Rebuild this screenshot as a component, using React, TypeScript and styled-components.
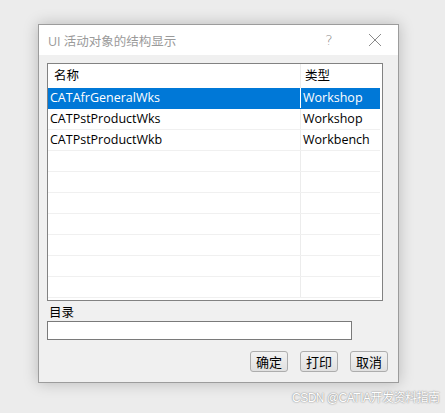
import styled, { createGlobalStyle } from 'styled-components'

const GlobalStyle = createGlobalStyle`
  html, body {
    margin: 0;
    padding: 0;
    background: #ececec;
  }
  body {
    font-family: 'Open Sans', 'Noto Sans CJK SC', sans-serif;
    font-size: 12px;
  }
`

const rows = [
  { name: 'CATAfrGeneralWks', type: 'Workshop', selected: true },
  { name: 'CATPstProductWks', type: 'Workshop' },
  { name: 'CATPstProductWkb', type: 'Workbench' }
]

const EMPTY_ROWS = 7

export const App = () => {
  return (
    <Page>
      <GlobalStyle />
      <Dialog>
        <TitleBar>
          <Title>UI 活动对象的结构显示</Title>
          <TitleTools>
            <Help>?</Help>
            <CloseBtn>
              <svg width="14" height="14" viewBox="0 0 14 14">
                <path d="M1 1 L13 13 M13 1 L1 13" stroke="#8a8a8a" strokeWidth="1" fill="none" />
              </svg>
            </CloseBtn>
          </TitleTools>
        </TitleBar>
        <Body>
          <ListBox>
            <HeaderRow>
              <HeadCell $pad={6}>名称</HeadCell>
              <Divider />
              <HeadCell $pad={4}>类型</HeadCell>
            </HeaderRow>
            {rows.map((r) => (
              <Row key={r.name} $selected={r.selected}>
                <Cell>{r.name}</Cell>
                <Divider $light={r.selected} />
                <Cell>{r.type}</Cell>
              </Row>
            ))}
            {Array.from({ length: EMPTY_ROWS }).map((_, i) => (
              <Row key={i}>
                <Cell />
                <Divider />
                <Cell />
              </Row>
            ))}
          </ListBox>
          <Label>目录</Label>
          <TextInput />
          <Buttons>
            <Button>确定</Button>
            <Button>打印</Button>
            <Button>取消</Button>
          </Buttons>
        </Body>
      </Dialog>
      <Watermark>CSDN @CATIA开发资料指南</Watermark>
    </Page>
  )
}

const Page = styled.div`
  position: relative;
  width: 445px;
  height: 413px;
  padding: 24px 0 0 38px;
  box-sizing: border-box;
  overflow: hidden;
`

const Dialog = styled.div`
  width: 361px;
  height: 359px;
  box-sizing: border-box;
  border: 1px solid #9c9c9c;
  background: #f0f0f0;
  box-shadow: 0 0 14px rgba(0, 0, 0, 0.22);
  display: flex;
  flex-direction: column;
`

const TitleBar = styled.div`
  height: 30px;
  background: #ffffff;
  display: flex;
  align-items: center;
  justify-content: space-between;
  padding-left: 9px;
`

const Title = styled.span`
  color: #9a9a9a;
  font-size: 12.5px;
`

const TitleTools = styled.div`
  display: flex;
  align-items: center;
  height: 100%;
`

const Help = styled.span`
  width: 46px;
  text-align: center;
  color: #8a8a8a;
  font-size: 14px;
  font-family: 'DejaVu Sans', sans-serif;
  font-weight: 300;
`

const CloseBtn = styled.span`
  width: 46px;
  display: flex;
  justify-content: center;
  align-items: center;
`

const Body = styled.div`
  flex: 1;
  display: flex;
  flex-direction: column;
  padding: 8px 15px 9px 8px;
`

const ListBox = styled.div`
  height: 238px;
  box-sizing: border-box;
  border: 1px solid #828282;
  background: #ffffff;
  padding-right: 2px;
  overflow: hidden;
`

const HeaderRow = styled.div`
  display: grid;
  grid-template-columns: 252px 1px 78px;
  height: 24px;
  align-items: center;
`

const HeadCell = styled.div<{ $pad: number }>`
  padding-left: ${(p) => p.$pad}px;
  color: #000000;
  font-size: 12.5px;
  line-height: 24px;
`

const Row = styled.div<{ $selected?: boolean }>`
  display: grid;
  grid-template-columns: 252px 1px 78px;
  height: 21px;
  box-sizing: border-box;
  border-bottom: 1px solid ${(p) => (p.$selected ? '#0078d7' : '#f0f0f0')};
  background: ${(p) => (p.$selected ? '#0078d7' : 'transparent')};
  color: ${(p) => (p.$selected ? '#ffffff' : '#000000')};
`

const Cell = styled.div`
  padding-left: 2px;
  font-size: 12.5px;
  line-height: 20px;
  white-space: nowrap;
  overflow: hidden;
`

const Divider = styled.div<{ $light?: boolean }>`
  align-self: stretch;
  background: ${(p) => (p.$light ? '#ffffff' : '#ececec')};
`

const Label = styled.div`
  margin-top: 3px;
  padding-left: 2px;
  height: 17px;
  line-height: 17px;
  font-size: 12.5px;
  color: #000000;
`

const TextInput = styled.div`
  width: 305px;
  height: 19px;
  box-sizing: border-box;
  border: 1px solid #7a7a7a;
  background: #ffffff;
`

const Buttons = styled.div`
  margin-top: auto;
  margin-bottom: 1px;
  display: flex;
  justify-content: flex-end;
  gap: 12px;
  margin-right: -5px;
`

const Button = styled.div`
  width: 38px;
  height: 21px;
  box-sizing: border-box;
  border: 1px solid #adadad;
  border-radius: 3px;
  background: linear-gradient(#f2f2f2, #e0e0e0);
  display: flex;
  align-items: center;
  justify-content: center;
  font-size: 13px;
  color: #000000;
`

const Watermark = styled.div`
  position: absolute;
  left: 292px;
  top: 388px;
  font-family: 'Liberation Sans', 'Noto Sans CJK SC', sans-serif;
  font-size: 12px;
  letter-spacing: -0.5px;
  color: #ffffff;
  text-shadow: 0 0 1px #8c8c8c, 0 0 2px #9a9a9a;
  white-space: nowrap;
`

export default App
